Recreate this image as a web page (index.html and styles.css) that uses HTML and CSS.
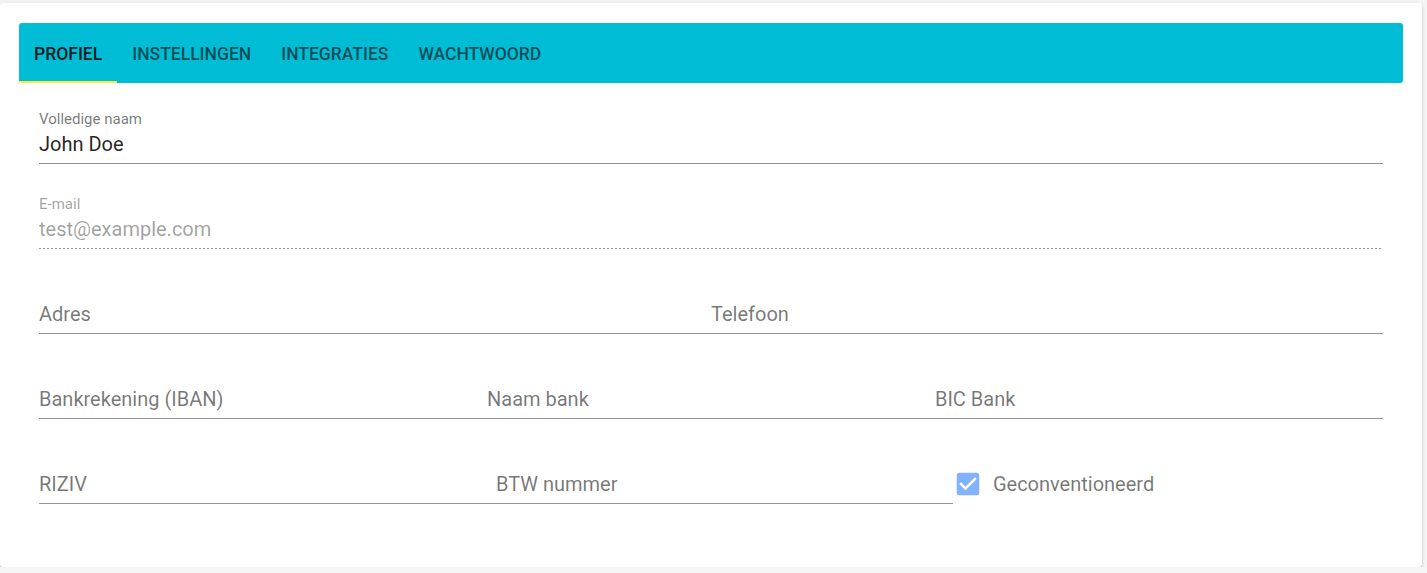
FILE: index.html
```html
<!DOCTYPE html>
<html lang="nl">
<head>
    <meta charset="UTF-8">
    <title>Profiel</title>
    <meta name="viewport" content="width=device-width, initial-scale=1.0">
    <link rel="stylesheet" href="styles.css">
</head>
<body>
    <div class="card">
        <div class="tabs">
            <div class="tab active">Profiel</div>
            <div class="tab">Instellingen</div>
            <div class="tab">Integraties</div>
            <div class="tab">Wachtwoord</div>
        </div>

        <form class="form">
            <div class="row">
                <div class="field">
                    <label for="name">Volledige naam</label>
                    <input type="text" id="name" value="John Doe">
                </div>
            </div>

            <div class="row">
                <div class="field disabled">
                    <label for="email">E-mail</label>
                    <input type="text" id="email" value="test@example.com" disabled>
                </div>
            </div>

            <div class="row">
                <div class="field half">
                    <label></label>
                    <input type="text" placeholder="Adres">
                </div>
                <div class="field half">
                    <label></label>
                    <input type="text" placeholder="Telefoon">
                </div>
            </div>

            <div class="row">
                <div class="field third">
                    <label></label>
                    <input type="text" placeholder="Bankrekening (IBAN)">
                </div>
                <div class="field third">
                    <label></label>
                    <input type="text" placeholder="Naam bank">
                </div>
                <div class="field third">
                    <label></label>
                    <input type="text" placeholder="BIC Bank">
                </div>
            </div>

            <div class="row">
                <div class="field wide">
                    <label></label>
                    <input type="text" placeholder="RIZIV">
                </div>
                <div class="field wide">
                    <label></label>
                    <input type="text" placeholder="BTW nummer">
                </div>
                <div class="check">
                    <svg viewBox="0 0 24 24" width="30" height="30">
                        <path fill="#82b1ff" d="M19,3H5C3.89,3 3,3.89 3,5V19A2,2 0 0,0 5,21H19A2,2 0 0,0 21,19V5C21,3.89 20.1,3 19,3Z"/>
                        <path fill="#fff" d="M10,17L5,12L6.41,10.58L10,14.17L17.59,6.58L19,8Z"/>
                    </svg>
                    <span>Geconventioneerd</span>
                </div>
            </div>
        </form>
    </div>
</body>
</html>
```

FILE: styles.css
```css
* { box-sizing: border-box; }
body {
    margin: 0;
    padding-top: 3px;
    background: #f5f5f5;
    font-family: Roboto, "Noto Sans", sans-serif;
}

.card {
    width: 1422px;
    background: #fff;
    border-radius: 3px;
    padding: 20px 19px 63px;
    box-shadow: 0 2px 2px rgba(0,0,0,0.2), 0 1px 5px rgba(0,0,0,0.1);
}

.tabs {
    display: flex;
    height: 60px;
    background: #00bcd4;
    border-radius: 3px;
}
.tab {
    display: flex;
    align-items: center;
    padding: 4px 15px 0;
    font-size: 17.5px;
    font-weight: 500;
    text-transform: uppercase;
    color: rgba(0,0,0,0.6);
    border-bottom: 2px solid transparent;
    cursor: pointer;
}
.tab.active {
    color: rgba(0,0,0,0.87);
    border-bottom-color: #ffeb3b;
}

.form {
    padding: 27px 20px 0;
    display: flex;
    flex-direction: column;
    gap: 31px;
}
.row { display: flex; }

.field {
    flex: 1 1 100%;
    border-bottom: 1px solid rgba(0,0,0,0.42);
    padding-bottom: 7px;
}
.field.half { flex: 0 0 50%; }
.field.third { flex: 0 0 33.3333%; }
.field.wide { flex: 0 0 34%; }

.field label {
    display: block;
    height: 18px;
    margin-bottom: 4px;
    font-size: 15px;
    line-height: 18px;
    color: rgba(0,0,0,0.54);
}
.field input {
    display: block;
    width: 100%;
    height: 24px;
    padding: 0;
    border: none;
    outline: none;
    background: transparent;
    font-family: inherit;
    font-size: 20px;
    line-height: 24px;
    color: rgba(0,0,0,0.87);
}
.field input::placeholder { color: rgba(0,0,0,0.54); }

.field.disabled {
    border-bottom: none;
    padding-bottom: 8px;
    background-image: linear-gradient(to right, rgba(0,0,0,0.42) 50%, transparent 50%);
    background-size: 4px 1px;
    background-repeat: repeat-x;
    background-position: left bottom;
}
.field.disabled label,
.field.disabled input {
    color: rgba(0,0,0,0.38);
    -webkit-text-fill-color: rgba(0,0,0,0.38);
}

.check {
    flex: 1;
    display: flex;
    align-items: center;
    padding-top: 13px;
    height: 54px;
    gap: 10px;
    font-size: 20px;
    color: rgba(0,0,0,0.54);
}
.check svg { display: block; }
```
